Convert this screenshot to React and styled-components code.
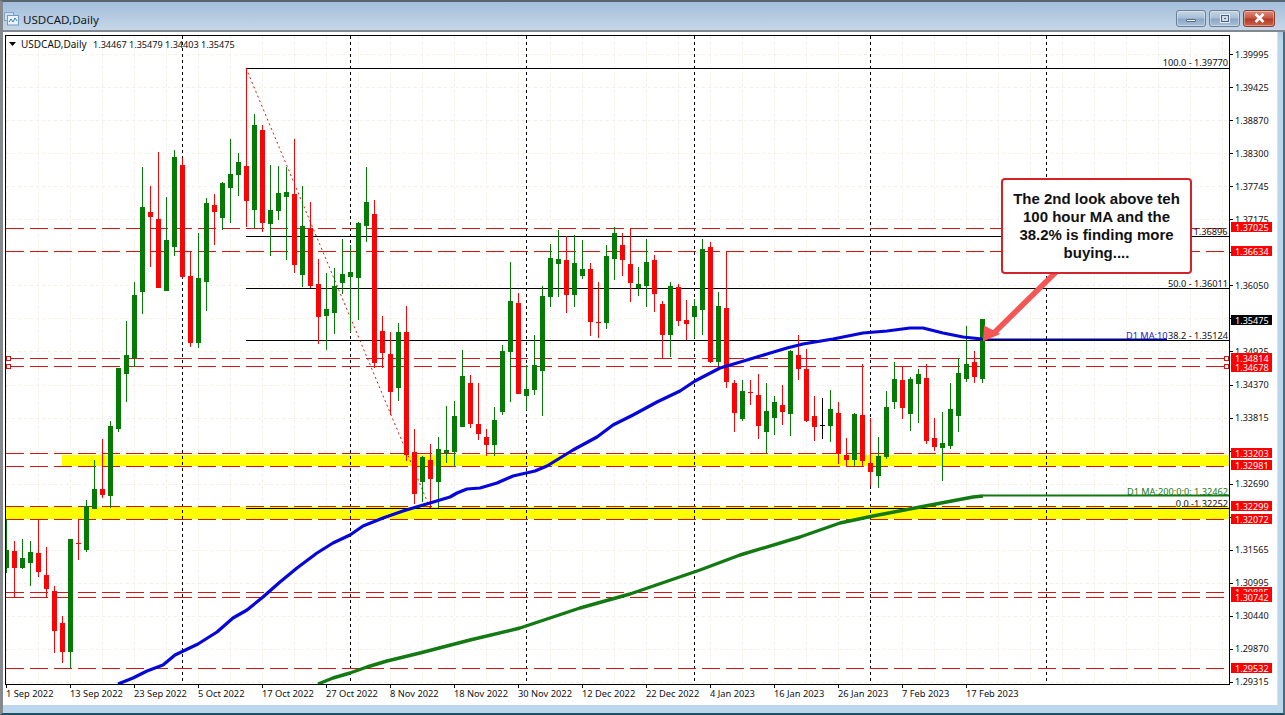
import React from 'react';
import styled, { createGlobalStyle } from 'styled-components';

const GlobalStyle = createGlobalStyle`
  html, body { margin: 0; padding: 0; background: #b9d6ec; }
  #root { width: 1285px; height: 715px; overflow: hidden; }
`;

const Window = styled.div`
  box-sizing: border-box;
  width: 1285px;
  height: 715px;
  display: flex;
  flex-direction: column;
  border-top: 2px solid #59656e;
  border-left: 3px solid #85898d;
  border-right: 2px solid #4a6b7c;
  border-bottom: 2px solid #1f5062;
  background: linear-gradient(#9fbbd8, #b6cde4 32px, #bcd7ed 40px);
`;

const TitleBar = styled.div`
  box-sizing: border-box;
  height: 30px;
  flex: none;
  display: flex;
  align-items: center;
  padding: 4px 8px 0 1px;
  background: linear-gradient(#a3bedb, #c6d6e7);
  border-bottom: 2px solid #80898f;
  margin-right: -2px;
`;

const TitleIcon = styled.svg`
  width: 15px;
  height: 14px;
  flex: none;
  margin-top: 2px;
`;

const TitleText = styled.span`
  margin: 3px 0 0 4px;
  font: 11.6px "Noto Sans", "Open Sans", sans-serif;
  color: #111a22;
`;

const Buttons = styled.div`
  margin-left: auto;
  display: flex;
  gap: 3px;
  margin-right: 2px;
`;

const WinButton = styled.div`
  box-sizing: border-box;
  width: ${p => p.$w}px;
  height: 17px;
  display: flex;
  align-items: center;
  justify-content: center;
  border: 1px solid ${p => (p.$close ? '#8e3a2c' : '#6b7f94')};
  border-radius: 3px;
  box-shadow: inset 0 0 0 1px rgba(255, 255, 255, 0.35);
  background: ${p =>
    p.$close
      ? 'linear-gradient(#dd8d7d, #c65a45 45%, #b23a26 55%, #c9634c)'
      : 'linear-gradient(#c4d4e5, #a9bfd7 45%, #8ba6c4 55%, #a9c0d9)'};
`;

const MinGlyph = styled.span`
  width: 10px;
  height: 3px;
  margin-top: 5px;
  background: #e6edf5;
  border: 1px solid #5c6c80;
  border-radius: 1px;
  box-sizing: border-box;
`;

const MaxGlyph = styled.span`
  width: 10px;
  height: 9px;
  box-sizing: border-box;
  background: #4e5f74;
  border: 1px solid #e4ebf3;
  box-shadow: inset 0 0 0 1px #4e5f74, inset 0 0 0 3px #cfdcea;
`;

const CloseGlyph = styled.svg`
  width: 13px;
  height: 10px;
`;

const ChartPanel = styled.div`
  position: relative;
  flex: none;
  width: 1274px;
  height: 673px;
  background: #fff;
  border-right: 1px solid #d9e1ea;
  box-sizing: content-box;
`;

const ChartSvg = styled.svg`
  display: block;
  width: 1274px;
  height: 673px;
`;

const Callout = styled.div`
  position: absolute;
  left: 998px;
  top: 146px;
  box-sizing: border-box;
  width: 191px;
  height: 96px;
  display: flex;
  align-items: center;
  justify-content: center;
  text-align: center;
  padding: 0 6px;
  background: #fff;
  border: 2.5px solid #d2232a;
  border-radius: 4px;
  font: bold 15px/18px "Liberation Sans", Arial, sans-serif;
  color: #111;
`;

const AxisText = styled.text`
  font-family: "Noto Sans", "Open Sans", sans-serif;
  font-size: ${p => p.$size || 9.1}px;
  fill: ${p => p.$fill || '#111'};
  dominant-baseline: central;
  text-anchor: ${p => p.$anchor || 'start'};
`;

/* [colour, bodyTop, bodyBottom, wickTop, wickBottom], one per bar, 8px apart from x = 6 */
const G = 'g', R = 'r', K = 'k';
const bars = [
  [G,550,568,519,573],[R,551,568,541,597],[G,558,568,539,569],[G,552,563,541,586],[R,553,572,519,577],
  [R,575,589,547,597],[R,591,631,586,653],[R,623,652,616,663],[G,539,652,539,668],[R,543,544,519,560],
  [G,506,550,500,552],[G,489,509,460,509],[R,489,495,439,498],[G,426,496,421,508],[G,368,429,368,432],
  [G,355,374,321,402],[G,295,358,282,367],[G,207,292,167,314],[R,212,217,186,267],[R,219,288,152,288],
  [G,240,291,197,291],[G,157,247,150,256],[R,165,277,158,278],[R,276,343,252,347],[G,278,343,233,348],
  [G,203,282,198,311],[R,205,212,194,245],[G,183,218,182,230],[G,174,188,139,223],[G,162,175,153,196],
  [R,166,201,68,227],[G,125,210,114,228],[R,130,223,125,232],[G,210,224,165,256],[G,193,211,166,220],
  [G,192,197,167,260],[R,194,265,139,273],[G,226,275,186,287],[R,228,286,202,288],[R,284,317,259,344],
  [G,309,316,273,350],[G,286,313,268,334],[G,274,283,239,294],[G,272,277,245,332],[G,223,278,222,320],
  [G,202,226,167,242],[R,214,363,200,368],[R,331,353,316,368],[R,354,392,332,415],[G,332,388,323,401],
  [R,332,455,306,461],[R,452,494,429,504],[G,457,482,456,502],[R,460,479,444,508],[G,449,482,437,508],
  [G,450,453,406,463],[G,416,452,401,466],[G,376,427,350,427],[R,383,424,375,428],[R,424,434,383,440],
  [R,437,445,429,456],[G,420,445,407,456],[G,351,412,345,415],[G,301,352,262,402],[R,303,394,293,394],
  [G,389,396,365,410],[G,365,390,335,395],[G,296,371,286,416],[G,258,297,244,307],[G,259,264,230,297],
  [R,260,295,236,313],[G,263,295,235,307],[G,269,276,240,279],[R,269,322,263,336],[R,322,323,282,338],
  [G,256,323,245,329],[G,233,259,227,280],[R,245,260,233,276],[R,264,283,228,302],[G,284,288,267,296],
  [G,262,286,239,307],[R,260,294,255,312],[R,304,335,301,358],[G,286,335,282,357],[R,287,321,284,326],
  [R,320,324,300,340],[G,306,317,299,338],[G,249,310,239,335],[R,247,362,242,363],[G,306,362,292,366],
  [R,308,382,251,388],[R,383,413,380,432],[G,391,419,380,421],[R,392,393,380,405],[R,395,426,374,439],
  [G,411,432,383,453],[G,402,418,396,435],[R,405,412,385,425],[G,351,414,350,436],[R,355,369,335,380],
  [R,369,421,349,422],[R,416,427,396,441],[K,425,426,398,439],[G,409,426,390,442],[R,413,454,402,464],
  [R,455,460,438,466],[G,414,460,413,466],[R,415,461,364,466],[R,463,472,418,486],[G,456,476,437,488],
  [G,407,457,391,459],[G,379,402,362,409],[R,380,408,366,419],[G,379,414,377,431],[G,374,384,369,423],
  [R,378,441,364,444],[R,438,447,418,451],[G,443,448,412,481],[G,409,446,383,449],[G,373,416,358,432],
  [G,364,379,326,382],[R,362,377,351,383],[G,319,379,319,383],
];
const barColor = { g: '#057a05', r: '#f60606', k: '#000' };

const blueMA = '118,684 133,678 147,671 163,665 175,655 198,644 217,632 233,618 247,610 263,597 280,582 297,568 317,553 333,543 350,535 363,526 383,518 403,511 413,508 430,503 450,497 457,493 467,489 480,488 497,483 513,476 535,471 547,466 573,450 597,437 613,425 633,415 657,402 680,391 695,381 720,368 737,363 767,354 787,348 803,344 833,339 863,333 887,331 910,328 923,328 943,333 963,337 982,339';
const greenMA = '318,684 333,678 350,673 367,667 387,661 420,653 470,640 520,628 580,608 630,594 700,570 740,555 800,537 840,523 873,516 920,507 973,497 983,496';

const gridY = Array.from({ length: 20 }, (_, i) => 54 + i * 33.1);
const gridX = Array.from({ length: 39 }, (_, i) => 6 + i * 32);
const separators = [182, 350, 526, 694, 870, 1046];
const redLines = [228, 251, 358, 366, 453, 466, 506, 519, 592, 597, 668];
const fibLines = [68, 236, 288, 340, 508];

const axisPrices = [
  ['1.39995',54],['1.39425',87],['1.38870',120],['1.38300',153],['1.37745',186],['1.37175',219],
  ['1.36050',285],['1.34925',351],['1.34370',384],['1.33815',417],['1.32690',483],['1.31565',549],
  ['1.30995',582],['1.30875',590],['1.30440',615],['1.29870',648],['1.29315',681],
];
const tags = [
  ['1.37025',222,'#f00'],['1.36634',246,'#f00'],['1.35475',315,'#000'],['1.34814',353,'#f00'],['1.34678',362,'#f00'],
  ['1.33203',448,'#f00'],['1.32981',460,'#f00'],['1.32299',501,'#f00'],['1.32072',514,'#f00'],['1.30885',587,'#f00'],
  ['1.30742',592,'#f00'],['1.29532',663,'#f00'],
];
const dates = ['1 Sep 2022','13 Sep 2022','23 Sep 2022','5 Oct 2022','17 Oct 2022','27 Oct 2022','8 Nov 2022','18 Nov 2022','30 Nov 2022','12 Dec 2022','22 Dec 2022','4 Jan 2023','16 Jan 2023','26 Jan 2023','7 Feb 2023','17 Feb 2023'];

function Chart() {
  return (
    <ChartSvg viewBox="3 32 1274 673">
      <defs>
        <clipPath id="plot"><rect x="6" y="36" width="1223" height="648" /></clipPath>
      </defs>
      <g clipPath="url(#plot)">
        <g stroke="#f3efe4" strokeWidth="1" strokeDasharray="3 3" shapeRendering="crispEdges">
          {gridY.map(y => <line key={y} x1="6" x2="1229" y1={y} y2={y} />)}
          {gridX.map(x => <line key={x} x1={x} x2={x} y1="36" y2="684" />)}
        </g>
        <rect x="62" y="455" width="1167" height="11" fill="#ffff00" />
        <rect x="6" y="507" width="1223" height="12" fill="#ffff00" />
        <g stroke="#000" strokeWidth="1" strokeDasharray="3 3" shapeRendering="crispEdges">
          {separators.map(x => <line key={x} x1={x + 0.5} x2={x + 0.5} y1="36" y2="684" />)}
        </g>
        <g stroke="#d61414" strokeWidth="1" strokeDasharray="18 6" shapeRendering="crispEdges">
          {redLines.map(y => <line key={y} x1="6" x2="1224" y1={y + 0.5} y2={y + 0.5} />)}
        </g>
        <g stroke="#000" strokeWidth="1" shapeRendering="crispEdges">
          {fibLines.map(y => <line key={y} x1="246" x2="1229" y1={y + 0.5} y2={y + 0.5} />)}
        </g>
        <line x1="246" y1="68" x2="430" y2="508" stroke="#d61414" strokeWidth="1" strokeDasharray="2 3" />
        <g shapeRendering="crispEdges">
          {bars.map(([c, bt, bb, wt, wb], k) => {
            const x = 6 + k * 8;
            return (
              <g key={k} fill={barColor[c]}>
                <rect x={x} y={wt} width="1" height={wb - wt} />
                <rect x={x - 2} y={bt} width="5" height={Math.max(bb - bt, 1)} />
              </g>
            );
          })}
        </g>
        <polyline points={greenMA} fill="none" stroke="#137a13" strokeWidth="3.4" strokeLinejoin="round" />
        <path d="M983 495.5 H1229" stroke="#137a13" strokeWidth="2" />
        <polyline points={blueMA} fill="none" stroke="#0606d8" strokeWidth="3.2" strokeLinejoin="round" />
        <path d="M982 339.5 H1167" stroke="#05058c" strokeWidth="2" />
        <path d="M1057 271 L994 333" stroke="#f45555" strokeWidth="5.5" />
        <path d="M984 340 L985 327 L998 334 Z" fill="#f45555" stroke="#f45555" strokeWidth="2" />
        <rect x="1224.5" y="356.5" width="4" height="4" fill="#fff" stroke="#d61414" />
        <rect x="1224.5" y="364.5" width="4" height="4" fill="#fff" stroke="#d61414" />
        <rect x="6.5" y="356.5" width="4" height="4" fill="#fff" stroke="#d61414" />
        <rect x="6.5" y="364.5" width="4" height="4" fill="#fff" stroke="#d61414" />
      </g>

      <rect x="5.5" y="35.5" width="1224" height="649" fill="none" stroke="#000" strokeWidth="1" shapeRendering="crispEdges" />
      <path d="M9 42 H16 L12.5 46 Z" fill="#000" />
      <AxisText x="21" y="44" $size={10}>USDCAD,Daily</AxisText>
      <AxisText x="93" y="44" $size={9.1}>1.34467 1.35479 1.34403 1.35475</AxisText>

      <AxisText x="1228" y="62" $anchor="end" $size={9.2}>100.0 - 1.39770</AxisText>
      <AxisText x="1227.5" y="231" $anchor="end" $size={9.2}>23.6 - 1.36896</AxisText>
      <AxisText x="1228" y="283" $anchor="end" $size={9.2}>50.0 - 1.36011</AxisText>
      <AxisText x="1126" y="335" $fill="#2222cc" $size={9.2}>D1 MA:10</AxisText>
      <AxisText x="1228" y="335" $anchor="end" $size={9.2}>38.2 - 1.35124</AxisText>
      <AxisText x="1228" y="491" $anchor="end" $fill="#1b7a1b" $size={9.2}>D1 MA:200:0:0: 1.32462</AxisText>
      <AxisText x="1228" y="503" $anchor="end" $size={9.2}>0.0 -1.32252</AxisText>

      <g stroke="#000" shapeRendering="crispEdges">
        {gridY.map(y => <line key={y} x1="1229" x2="1233" y1={y} y2={y} />)}
        {dates.map((_, i) => <line key={i} x1={6.5 + i * 64} x2={6.5 + i * 64} y1="684" y2="688" />)}
      </g>
      {axisPrices.map(([t, y]) => <AxisText key={t} x="1235" y={y}>{t}</AxisText>)}
      {tags.map(([t, y, bg]) => (
        <g key={t}>
          <rect x="1231" y={y} width="41" height="10" fill={bg} shapeRendering="crispEdges" />
          <AxisText x="1235" y={y + 5} $fill="#fff">{t}</AxisText>
        </g>
      ))}
      {dates.map((d, i) => <AxisText key={d} x={6 + i * 64} y="693" $size={9.3}>{d}</AxisText>)}
    </ChartSvg>
  );
}

export default function App() {
  return (
    <>
      <GlobalStyle />
      <Window>
        <TitleBar>
          <TitleIcon viewBox="0 0 15 14">
            <rect x="0.5" y="0.5" width="9" height="8" fill="#cfe0f0" stroke="#7fa6c8" />
            <rect x="3.5" y="3.5" width="11" height="9.5" fill="#eaf3fb" stroke="#6f9cc2" />
            <path d="M5 10 L7 7 L9 10 L11 6 L13 9" fill="none" stroke="#3d7fb0" />
          </TitleIcon>
          <TitleText>USDCAD,Daily</TitleText>
          <Buttons>
            <WinButton $w={30}><MinGlyph /></WinButton>
            <WinButton $w={31}><MaxGlyph /></WinButton>
            <WinButton $w={32} $close>
              <CloseGlyph viewBox="0 0 13 10">
                <path d="M2.5 1 L10.5 9 M10.5 1 L2.5 9" stroke="#fff" strokeWidth="2.6" />
              </CloseGlyph>
            </WinButton>
          </Buttons>
        </TitleBar>
        <ChartPanel>
          <Chart />
          <Callout>The 2nd look above teh 100 hour MA and the 38.2% is finding more buying....</Callout>
        </ChartPanel>
      </Window>
    </>
  );
}
